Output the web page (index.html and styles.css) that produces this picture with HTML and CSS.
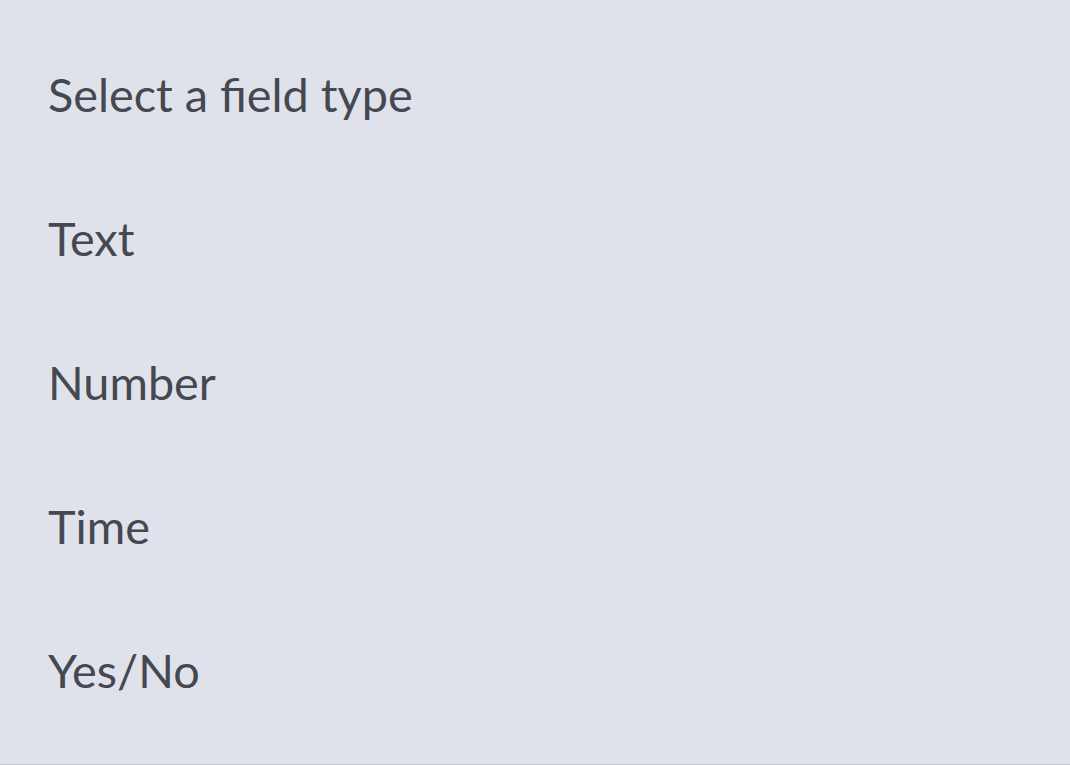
FILE: index.html
```html
<!DOCTYPE html>
<html>
<head>
<meta charset="utf-8">
<link rel="stylesheet" href="styles.css">
</head>
<body>
<div class="panel">
  <ul class="options">
    <li class="option">Select a field type</li>
    <li class="option">Text</li>
    <li class="option">Number</li>
    <li class="option">Time</li>
    <li class="option">Yes/No</li>
  </ul>
</div>
</body>
</html>
```
FILE: styles.css
```css
html, body {
  margin: 0;
  padding: 0;
  background: #dfe2ea;
}
.panel {
  box-sizing: border-box;
  height: 765px;
  padding: 22px 0 0 48px;
  border-bottom: 1px solid #c4c6cc;
  background: #dfe2ea;
}
.options {
  list-style: none;
  margin: 0;
  padding: 0;
}
.option {
  font-family: Lato, "Liberation Sans", sans-serif;
  font-size: 46.8px;
  line-height: 144px;
  color: #454850;
  white-space: nowrap;
}
```
